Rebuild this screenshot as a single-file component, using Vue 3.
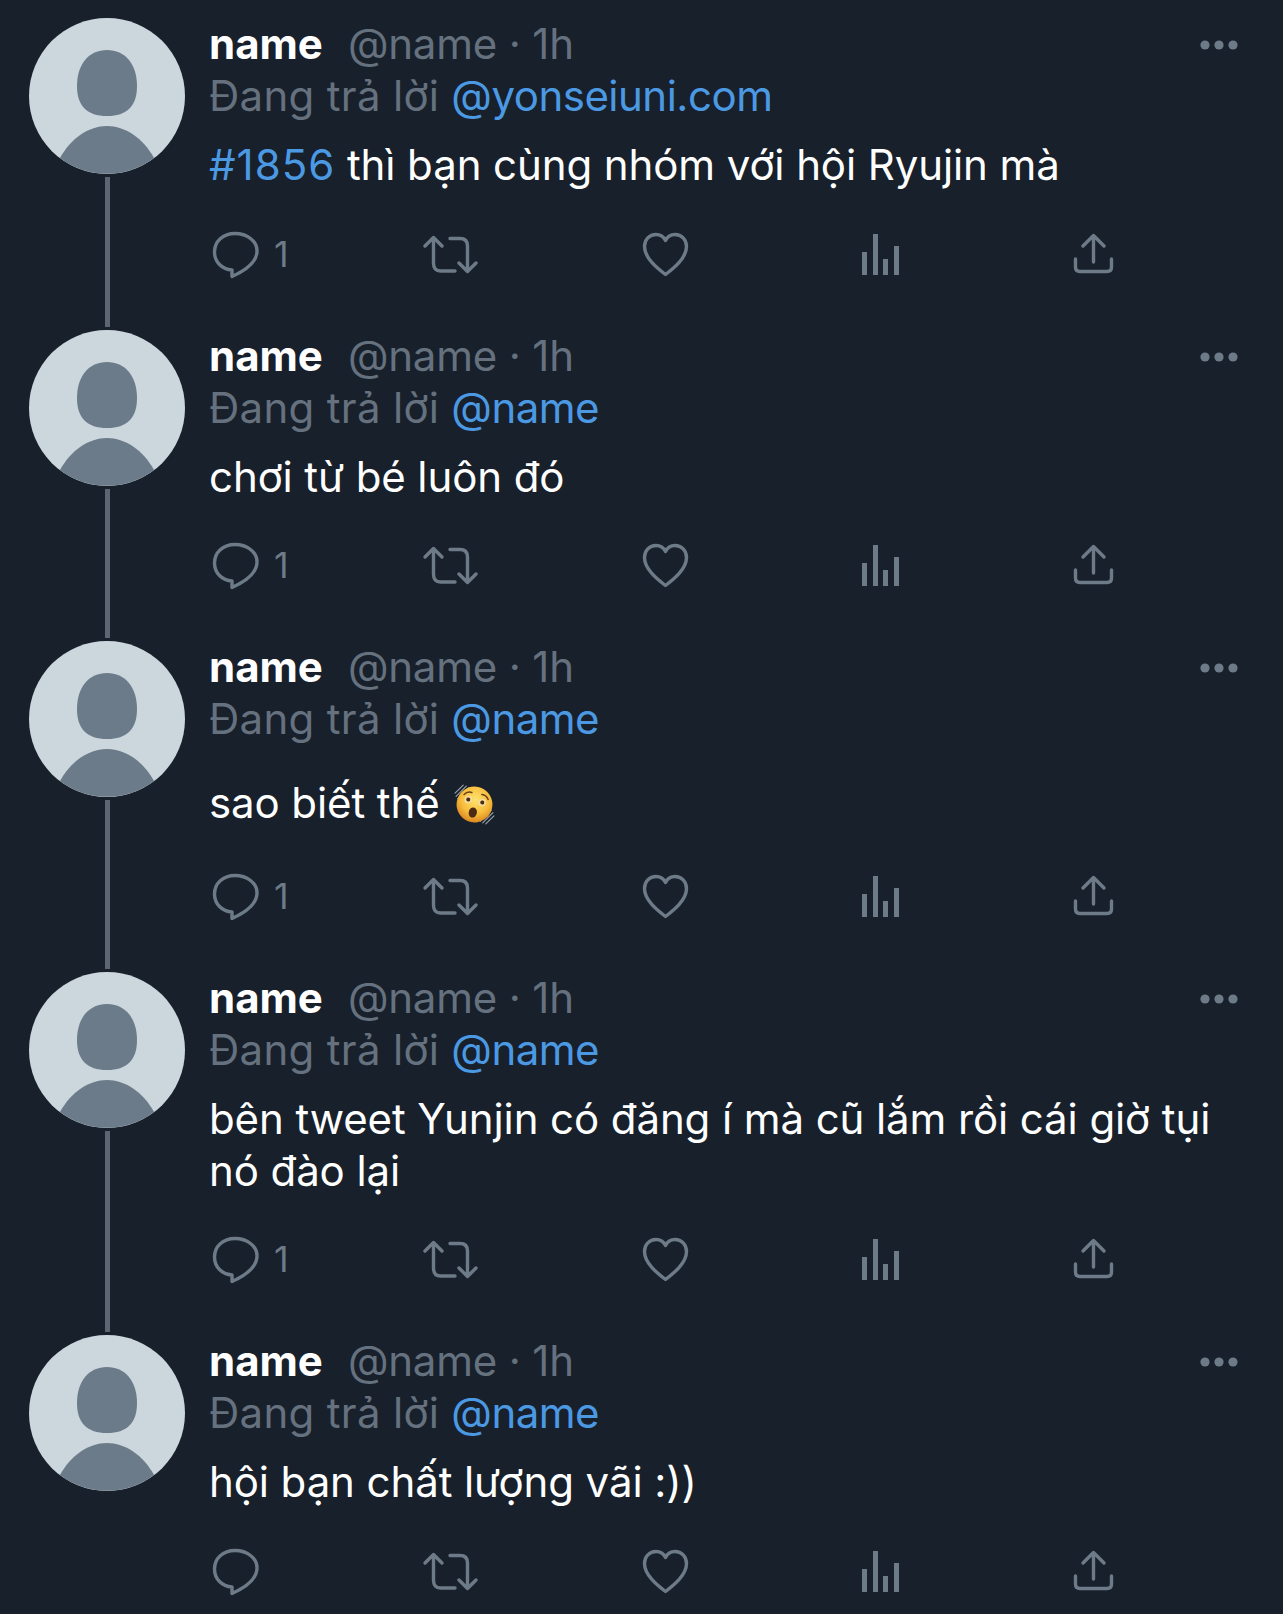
<script setup>
const rows = [
  { reply: '@yonseiuni.com', tag: '#1856', text: ' thì bạn cùng nhóm với hội Ryujin mà', count: '1', last: false },
  { reply: '@name', text: 'chơi từ bé luôn đó', count: '1', last: false },
  { reply: '@name', text: 'sao biết thế ', emoji: true, count: '1', last: false },
  { reply: '@name', text: 'bên tweet Yunjin có đăng í mà cũ lắm rồi cái giờ tụi nó đào lại', count: '1', last: false },
  { reply: '@name', text: 'hội bạn chất lượng vãi :))', count: '', last: true },
]
</script>

<template>
  <main class="page">
    <article v-for="(r, i) in rows" :key="i" class="row">
      <div class="side">
        <svg class="avatar" viewBox="0 0 156 156">
          <circle cx="78" cy="78" r="78" fill="#ccd6dd" />
          <path d="M78 32C96 32 108 46 108 68C108 88 98 98 78 98C58 98 48 88 48 68C48 46 60 32 78 32Z" fill="#6c7b89" />
          <path d="M31 140C42 120 60 108 78 108C96 108 114 120 125 140A78 78 0 0 1 31 140Z" fill="#6c7b89" />
        </svg>
        <div v-if="!r.last" class="line"></div>
      </div>
      <div class="content">
        <header class="head">
          <div class="who">
            <span class="name">name</span>
            <span class="handle">@name · 1h</span>
          </div>
          <svg class="dots" viewBox="0 0 38 10">
            <circle cx="5" cy="5" r="4.6" />
            <circle cx="19" cy="5" r="4.6" />
            <circle cx="33" cy="5" r="4.6" />
          </svg>
        </header>
        <div class="reply">Đang trả lời <a class="link">{{ r.reply }}</a></div>
        <p class="body" :class="{ tall: r.emoji }">
          <span v-if="r.tag" class="tag">{{ r.tag }}</span>{{ r.text }}<svg v-if="r.emoji" class="emoji" viewBox="0 0 40 40">
            <defs>
              <radialGradient id="face" cx="50%" cy="36%" r="66%">
                <stop offset="0%" stop-color="#fde26e" />
                <stop offset="60%" stop-color="#f7bd3c" />
                <stop offset="100%" stop-color="#d9821f" />
              </radialGradient>
            </defs>
            <g fill="none" stroke="#9aa3ad" stroke-width="1.1" stroke-linecap="round">
              <path d="M1 9L9 1M2 12L12 2M3.500 14.500L14.500 3.500" />
              <path d="M39 31L31 39M38 28L28 38M36.500 25.500L25.500 36.500" />
            </g>
            <g transform="rotate(12 20 20)">
              <circle cx="20" cy="20" r="17.500" fill="url(#face)" />
              <path d="M8 12.500Q10.500 8.500 15 9M25 9Q29.500 8.500 32 12.500" fill="none" stroke="#6b3f1a" stroke-width="1.500" stroke-linecap="round" />
              <circle cx="13" cy="16.500" r="3.700" fill="#f6dc9a" />
              <circle cx="27" cy="16.500" r="3.700" fill="#f6dc9a" />
              <circle cx="13" cy="16.500" r="2" fill="#4a2c14" />
              <circle cx="27" cy="16.500" r="2" fill="#4a2c14" />
              <ellipse cx="20" cy="28" rx="4" ry="5" fill="#4e2a12" />
            </g>
          </svg>
        </p>
        <div class="actions">
          <div class="slot">
            <svg class="icon" viewBox="0 0 56 56">
              <path d="M27 7.500C15 7.500 6.500 15.500 6.500 26C6.500 36 14 43.500 24 44L24 50.500C34 46 49 37 49 25C49 15 39 7.500 27 7.500Z" />
            </svg>
            <span class="count">{{ r.count }}</span>
          </div>
          <div class="slot">
            <svg class="icon" viewBox="0 0 56 56">
              <path d="M3 20L11.500 11.500L20 20M11.500 12V37C11.500 42 14 45 18.500 45H33" />
              <path d="M28 12.500H38C42.500 12.500 45.500 15 45.500 20V45.500M37 37L45.500 45.500L54 37" />
            </svg>
          </div>
          <div class="slot">
            <svg class="icon" viewBox="0 0 56 56">
              <path d="M29.500 48.500C21 42 8.500 32 8.500 20.500C8.500 13.500 13.500 8.500 20 8.500C24 8.500 27.500 10.500 29.500 14.500C31.500 10.500 35 8.500 39 8.500C45.500 8.500 50.500 13.500 50.500 20.500C50.500 32 38 42 29.500 48.500Z" />
            </svg>
          </div>
          <div class="slot">
            <svg class="icon bars" viewBox="0 0 56 56">
              <rect x="12" y="26" width="5" height="23" />
              <rect x="23" y="8" width="5" height="41" />
              <rect x="33" y="33" width="5" height="16" />
              <rect x="44" y="20" width="5" height="29" />
            </svg>
          </div>
          <div class="slot">
            <svg class="icon" viewBox="0 0 56 56">
              <path d="M29.500 36V10M19 20L29.500 9.500L40 20" />
              <path d="M11.500 33V41C11.500 44 13 45.500 16 45.500H43C46 45.500 47.500 44 47.500 41V33" />
            </svg>
          </div>
        </div>
      </div>
    </article>
  </main>
</template>

<style>
html, body { background: #18202b; }
</style>

<style scoped>
.page {
  width: 1283px;
  height: 1614px;
  box-sizing: border-box;
  padding: 18px 45px 0 29px;
  background: #18202b;
  overflow: hidden;
  font-family: Inter, "Liberation Sans", sans-serif;
  font-size: 42px;
  color: #fff;
}
.row { display: flex; gap: 24px; }
.side { width: 156px; flex: none; display: flex; flex-direction: column; align-items: center; }
.avatar { width: 156px; height: 156px; display: block; flex: none; }
.line { flex: 1; width: 5px; margin: 3px 0; background: #5c6672; }
.content { flex: 1; min-width: 0; padding-bottom: 48px; }
.head { display: flex; justify-content: space-between; align-items: center; height: 52px; }
.who { display: flex; gap: 25px; white-space: nowrap; line-height: 52px; }
.name { font-weight: 700; }
.handle { color: #65717e; letter-spacing: -0.2px; }
.reply { color: #65717e; line-height: 52px; white-space: nowrap; letter-spacing: 0.3px; }
.link { color: #4b99e3; letter-spacing: -0.5px; }
.tag { color: #4b99e3; letter-spacing: 1px; }
.dots { width: 38px; height: 10px; fill: #6d7a87; flex: none; margin-top: 2px; }
.body { margin: 17px 0 0; line-height: 51.5px; max-width: 1030px; letter-spacing: -0.1px; }
.body.tall { padding-top: 14.5px; padding-bottom: 5px; }
.emoji { width: 41px; height: 41px; margin-left: 3px; vertical-align: -7px; }
.actions { display: grid; grid-template-columns: repeat(5, 214px); margin: 35px 0 0 -1px; height: 56px; }
.slot { display: flex; align-items: center; gap: 10px; }
.icon { width: 56px; height: 56px; flex: none; fill: none; stroke: #6d7a87; stroke-width: 3.4; stroke-linecap: round; stroke-linejoin: round; }
.icon.bars { fill: #6d7a87; stroke: none; }
.count { color: #6d7a87; font-size: 36px; line-height: 56px; }
</style>
